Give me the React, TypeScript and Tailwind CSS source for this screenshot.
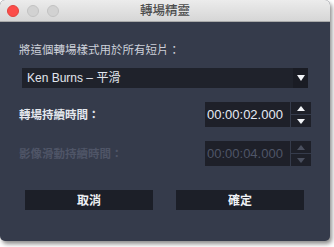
import React from "react";

const cjk = { fontFamily: '"Noto Sans CJK TC", "Noto Sans CJK SC", sans-serif' };
const latin = { fontFamily: '"Liberation Sans", "Noto Sans CJK TC", sans-serif' };

function Stepper({ disabled }: { disabled?: boolean }) {
  const c = disabled ? "border-b-[#4a4f5e]" : "border-b-[#f2f4f8]";
  const c2 = disabled ? "border-t-[#4a4f5e]" : "border-t-[#f2f4f8]";
  return (
    <div className="flex flex-col gap-[1px] w-[20px] ml-[1px]">
      <div className="h-[12px] bg-[#1e2029] flex items-center justify-center">
        <div className={`w-0 h-0 border-l-[4px] border-r-[4px] border-b-[5px] border-l-transparent border-r-transparent ${c}`} />
      </div>
      <div className="h-[12px] bg-[#1e2029] flex items-center justify-center">
        <div className={`w-0 h-0 border-l-[4px] border-r-[4px] border-t-[5px] border-l-transparent border-r-transparent ${c2}`} />
      </div>
    </div>
  );
}

function Row({ label, value, disabled }: { label: string; value: string; disabled?: boolean }) {
  return (
    <div className="flex items-center h-[25px]">
      <div
        className={`ml-[19px] text-[11.5px] font-bold ${disabled ? "text-[#4f5567]" : "text-[#e4e7ee]"}`}
        style={cjk}
      >
        {label}
      </div>
      <div className="ml-auto flex mr-[19px]">
        <div
          className={`w-[85px] h-[25px] bg-[#1e2029] flex items-center pl-[2px] text-[13px] ${disabled ? "text-[#4f5567]" : "text-[#e6ebf5]"}`}
          style={latin}
        >
          {value}
        </div>
        <Stepper disabled={disabled} />
      </div>
    </div>
  );
}

export default function App() {
  return (
    <div className="w-[334px] h-[247px] bg-white relative overflow-hidden">
      <div className="w-[330px] h-[241px] rounded-[5px] overflow-hidden flex flex-col bg-[#353b4b] shadow-[2px_3px_4px_rgba(0,0,0,0.45)]">
        <div className="h-[22px] shrink-0 bg-gradient-to-b from-[#ececec] to-[#d6d6d6] border-b border-[#a9a9a9] relative flex items-center">
          <div className="flex gap-[8px] ml-[7px]">
            <div className="w-[12px] h-[12px] rounded-full bg-[#fc4d4a] border border-[#e0443e]" />
            <div className="w-[12px] h-[12px] rounded-full bg-[#d2d2d2] border border-[#c2c2c2]" />
            <div className="w-[12px] h-[12px] rounded-full bg-[#d2d2d2] border border-[#c2c2c2]" />
          </div>
          <div
            className="absolute left-0 right-0 top-0 bottom-0 flex items-center justify-center text-[12.5px] font-medium text-[#4c4c4c]"
            style={cjk}
          >
            轉場精靈
          </div>
        </div>
        <div className="flex flex-col">
          <div className="mt-[19px] ml-[19px] text-[11.5px] leading-[16px] text-[#cdd1da]" style={cjk}>
            將這個轉場樣式用於所有短片：
          </div>
          <div className="mt-[11px] ml-[22px] w-[286px] h-[20px] bg-[#1f222b] flex items-center">
            <div className="flex-1 pl-[5px] text-[12px] text-[#e2e6ee]" style={latin}>
              Ken Burns – 平滑
            </div>
            <div className="w-[15px] h-[20px] bg-[#1a1c24] flex items-center justify-center">
              <div className="w-0 h-0 border-l-[4px] border-r-[4px] border-t-[6px] border-l-transparent border-r-transparent border-t-[#f2f4f8]" />
            </div>
          </div>
          <div className="mt-[14px]">
            <Row label="轉場持續時間：" value="00:00:02.000" />
          </div>
          <div className="mt-[14px]">
            <Row label="影像滑動持續時間：" value="00:00:04.000" disabled />
          </div>
          <div className="mt-[24px] flex ml-[25px] gap-[23px]">
            <div className="w-[128px] h-[20px] bg-[#1c1f28] flex items-center justify-center text-[12px] font-bold text-[#eef0f4]" style={cjk}>
              取消
            </div>
            <div className="w-[128px] h-[20px] bg-[#1c1f28] flex items-center justify-center text-[12px] font-bold text-[#eef0f4]" style={cjk}>
              確定
            </div>
          </div>
        </div>
      </div>
    </div>
  );
}
